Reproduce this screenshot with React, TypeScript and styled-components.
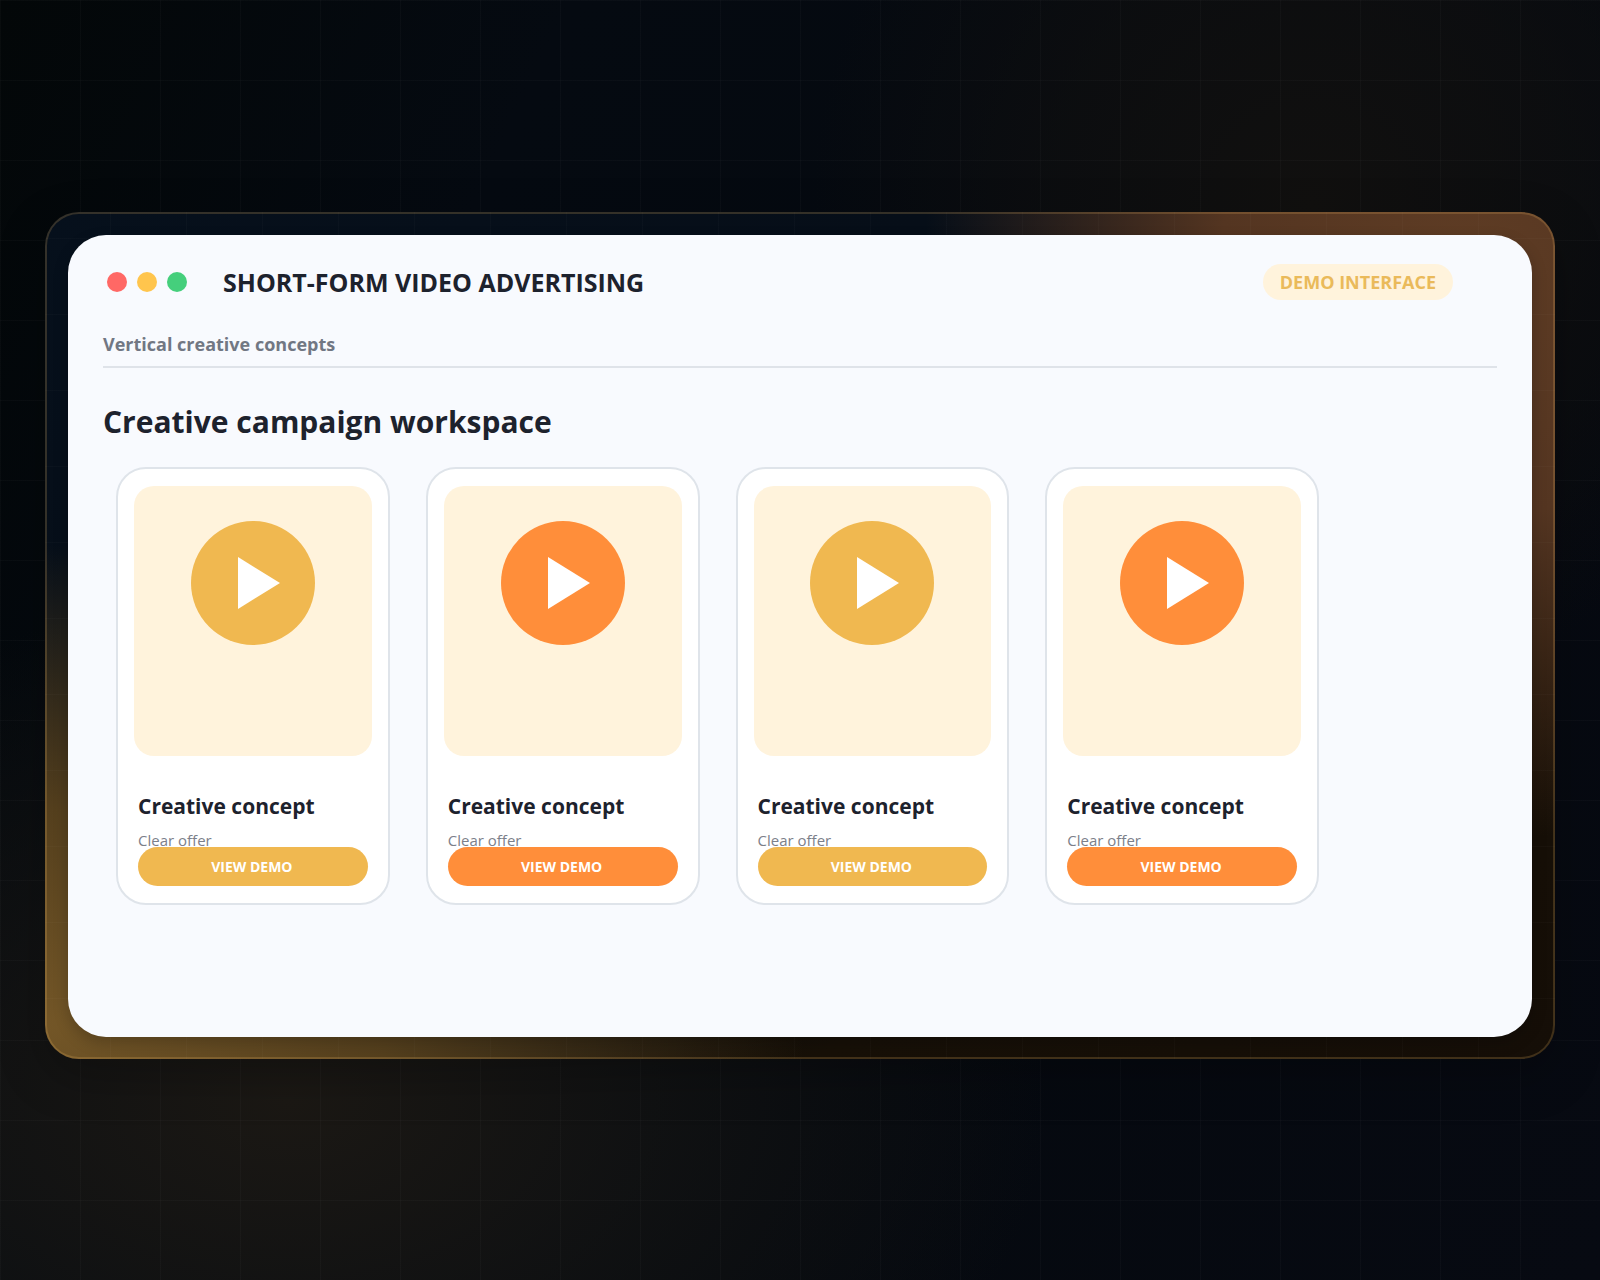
import React from "react";
import styled, { createGlobalStyle } from "styled-components";

const ink = "#1d222d";
const gold = "#f0b850";
const orange = "#ff8e3a";
const cream = "#fff3dc";

const GlobalStyle = createGlobalStyle`
  *, *::before, *::after { box-sizing: border-box; }
  body {
    margin: 0;
    background: #05080d;
    color: ${ink};
    font-family: "Open Sans", "Noto Sans", sans-serif;
  }
  h1, h2, h3, p { margin: 0; }
`;

const Stage = styled.main`
  min-height: 100vh;
  display: flex;
  flex-direction: column;
  justify-content: center;
  padding: 0 45px 9px;
  background:
    repeating-linear-gradient(90deg, rgba(255, 255, 255, 0.025) 0 1px, transparent 1px 80px),
    repeating-linear-gradient(180deg, rgba(255, 255, 255, 0.025) 0 1px, transparent 1px 80px),
    radial-gradient(ellipse 760px 500px at 18% 86%, #1b1814 0%, rgba(20, 20, 19, 0.7) 50%, transparent 100%),
    radial-gradient(ellipse 500px 500px at 82% 16%, #11100f 0%, rgba(15, 15, 15, 0.7) 50%, transparent 100%),
    linear-gradient(115deg, #030708 0%, #050a11 26%, #05090f 60%, #070a12 100%);
`;

const Frame = styled.div`
  padding: 21px 21px 20px;
  border: 2px solid rgba(240, 184, 100, 0.2);
  border-radius: 34px;
  background:
    repeating-linear-gradient(90deg, transparent 0 65px, rgba(255, 255, 255, 0.02) 65px 66px, transparent 66px 76px),
    repeating-linear-gradient(180deg, transparent 0 26px, rgba(255, 255, 255, 0.02) 26px 27px, transparent 27px 76px),
    radial-gradient(ellipse 760px 480px at 0% 96%, #735627 0%, #543f1d 45%, transparent 100%),
    radial-gradient(ellipse 540px 580px at 94% 6%, #5e3c24 0%, #543521 45%, transparent 100%),
    linear-gradient(150deg, #06101c 0%, #060d16 45%, #171007 75%, #150e07 100%);
  background-origin: border-box;
  box-shadow: 0 16px 48px rgba(0, 0, 0, 0.25);
`;

const Window = styled.section`
  min-height: 802px;
  padding: 29px 35px 119px;
  border-radius: 38px;
  background: #f8fafe;
  box-shadow: 0 6px 16px rgba(0, 0, 0, 0.2);
`;

const TitleBar = styled.header`
  display: flex;
  align-items: center;
  height: 36px;
  padding: 0 44px 0 4px;
`;

const Dots = styled.div`
  display: flex;
  gap: 10px;
  margin-right: 36px;
`;

const Dot = styled.span<{ $color: string }>`
  width: 20px;
  height: 20px;
  border-radius: 50%;
  background: ${(p) => p.$color};
`;

const AppTitle = styled.h1`
  font-size: 25px;
  line-height: 36px;
  font-weight: 700;
`;

const Badge = styled.span`
  margin-left: auto;
  padding: 0 17px;
  border-radius: 18px;
  background: ${cream};
  color: #eaba5a;
  font-size: 18px;
  line-height: 36px;
  font-weight: 700;
`;

const Subtitle = styled.p`
  margin-top: 29px;
  padding-bottom: 7px;
  border-bottom: 2px solid #dfe3e9;
  color: #717783;
  font-size: 18px;
  line-height: 30px;
  font-weight: 700;
`;

const Heading = styled.h2`
  margin-top: 32px;
  font-size: 30px;
  line-height: 44px;
  font-weight: 700;
`;

const CardGrid = styled.div`
  display: grid;
  grid-template-columns: repeat(4, 1fr);
  gap: 36px;
  margin-top: 23px;
  padding: 0 178px 0 13px;
`;

const Card = styled.article`
  padding: 17px 16px 17px;
  border: 2px solid #dfe4ea;
  border-radius: 30px;
  background: #ffffff;
`;

const Thumb = styled.div`
  display: flex;
  justify-content: center;
  height: 270px;
  padding-top: 35px;
  border-radius: 20px;
  background: ${cream};
`;

const Play = styled.button<{ $accent: string }>`
  width: 124px;
  height: 124px;
  padding: 0;
  border: 0;
  border-radius: 50%;
  background: ${(p) => p.$accent};
  cursor: pointer;
  svg { display: block; }
`;

const CardBody = styled.div`
  display: flex;
  flex-direction: column;
  padding: 35px 4px 0;
`;

const CardTitle = styled.h3`
  font-size: 21px;
  line-height: 30px;
  font-weight: 700;
`;

const CardText = styled.p`
  margin-top: 12px;
  color: #7c808a;
  font-size: 15px;
  line-height: 14px;
`;

const Action = styled.button<{ $accent: string }>`
  height: 39px;
  padding: 0 2px 0 0;
  border: 0;
  border-radius: 20px;
  background: ${(p) => p.$accent};
  color: #ffffff;
  font: inherit;
  font-size: 14px;
  line-height: 20px;
  font-weight: 700;
  cursor: pointer;
`;

const accents = [gold, orange, gold, orange];

export default function App() {
  return (
    <>
      <GlobalStyle />
      <Stage>
        <Frame>
          <Window>
            <TitleBar>
              <Dots>
                <Dot $color="#ff6865" />
                <Dot $color="#ffc54d" />
                <Dot $color="#45cf7c" />
              </Dots>
              <AppTitle>SHORT-FORM VIDEO ADVERTISING</AppTitle>
              <Badge>DEMO INTERFACE</Badge>
            </TitleBar>
            <Subtitle>Vertical creative concepts</Subtitle>
            <Heading>Creative campaign workspace</Heading>
            <CardGrid>
              {accents.map((accent, i) => (
                <Card key={i}>
                  <Thumb>
                    <Play $accent={accent} aria-label="Play creative concept">
                      <svg width="124" height="124" viewBox="0 0 124 124" aria-hidden="true">
                        <path d="M47 36L89 62L47 88Z" fill="#ffffff" />
                      </svg>
                    </Play>
                  </Thumb>
                  <CardBody>
                    <CardTitle>Creative concept</CardTitle>
                    <CardText>Clear offer</CardText>
                    <Action $accent={accent}>VIEW DEMO</Action>
                  </CardBody>
                </Card>
              ))}
            </CardGrid>
          </Window>
        </Frame>
      </Stage>
    </>
  );
}
